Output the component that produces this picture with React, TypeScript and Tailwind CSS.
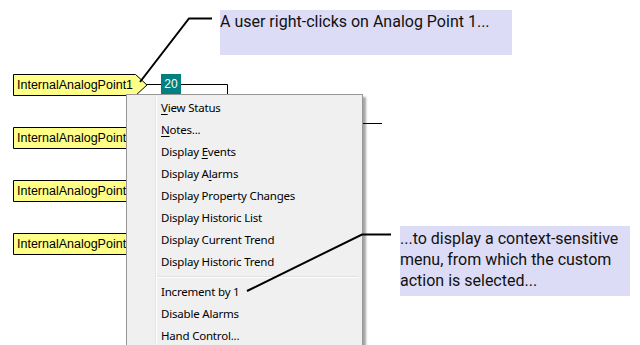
import React from "react";

type Item = { pre?: string; key?: string; post: string } | "sep";

const menuItems: Item[] = [
  { key: "V", post: "iew Status" },
  { key: "N", post: "otes..." },
  { pre: "Display ", key: "E", post: "vents" },
  { pre: "Display A", key: "l", post: "arms" },
  { post: "Display Property Changes" },
  { post: "Display Historic List" },
  { post: "Display Current Trend" },
  { post: "Display Historic Trend" },
  "sep",
  { post: "Increment by 1" },
  { post: "Disable Alarms" },
  { post: "Hand Control..." },
];

function PointLabel({ top, arrow }: { top: number; arrow?: boolean }) {
  return (
    <div className="absolute left-[13px] h-[22px] w-[135px]" style={{ top }}>
      <svg className="absolute inset-0" width="135" height="22">
        <polygon
          points={arrow ? "0.5,0.5 122.5,0.5 134,11 122.5,21.5 0.5,21.5" : "0.5,0.5 134.5,0.5 134.5,21.5 0.5,21.5"}
          fill="#ffff88"
          stroke="#000"
          strokeWidth="1"
        />
      </svg>
      <span className="relative block pl-[4px] leading-[22px] text-[12.5px] text-black font-['Liberation_Sans',Arial,sans-serif]">
        InternalAnalogPoint1
      </span>
    </div>
  );
}

export default function App() {
  return (
    <div className="relative w-[640px] h-[345px] overflow-hidden bg-white font-['Roboto',sans-serif]">
      {/* connectors behind the menu */}
      <svg className="absolute inset-0" width="640" height="345">
        <line x1="147" y1="84.5" x2="161" y2="84.5" stroke="#000" />
        <polyline points="181,84.5 227.5,84.5 227.5,96" fill="none" stroke="#000" />
        <line x1="300" y1="123.5" x2="382" y2="123.5" stroke="#000" />
      </svg>

      <PointLabel top={74} arrow />
      <PointLabel top={127} />
      <PointLabel top={180} />
      <PointLabel top={233} />

      <div className="absolute left-[161px] top-[74px] w-[20px] h-[21px] bg-[#008080] text-white text-[12px] leading-[21px] text-center font-['Liberation_Sans',Arial,sans-serif]">
        20
      </div>

      {/* context menu */}
      <div className="absolute left-[126px] top-[94px] w-[237px] h-[270px] flex flex-col bg-[#f0f0f0] border border-[#979797] shadow-[3px_3px_2px_rgba(0,0,0,0.35)] pt-[2px] font-['Noto_Sans',sans-serif] text-[11.5px] tracking-[-0.2px] text-black">
        <div className="absolute left-[28px] top-0 bottom-0 w-[2px] border-l border-[#e2e3e3] bg-white" />
        {menuItems.map((it, i) =>
          it === "sep" ? (
            <div key={i} className="h-[8px] flex items-center pl-[30px] pr-[4px]">
              <div className="h-[2px] w-full border-t border-[#e0e0e0] bg-white" />
            </div>
          ) : (
            <div key={i} className="relative h-[22px] leading-[22px] pl-[34px] whitespace-nowrap">
              {it.pre}
              {it.key && <span className="underline underline-offset-2">{it.key}</span>}
              {it.post}
            </div>
          )
        )}
      </div>

      {/* callout lines over everything */}
      <svg className="absolute inset-0" width="640" height="345">
        <polyline points="140,82 189,18.5 212,18.5" fill="none" stroke="#000" strokeWidth="2" />
        <polyline points="247,291 362,234.5 391,234.5" fill="none" stroke="#000" strokeWidth="2" />
      </svg>

      <div className="absolute left-[220px] top-[10px] w-[292px] h-[45px] bg-[#dddcf6] text-[16px] leading-[19px] pt-[2px] text-[#111]">
        A user right-clicks on Analog Point 1...
      </div>

      <div className="absolute left-[400px] top-[226px] w-[230px] h-[70px] bg-[#dddcf6] text-[16px] leading-[21px] pt-[2px] text-[#111]">
        ...to display a context-sensitive
        <br />
        menu, from which the custom
        <br />
        action is selected...
      </div>
    </div>
  );
}
